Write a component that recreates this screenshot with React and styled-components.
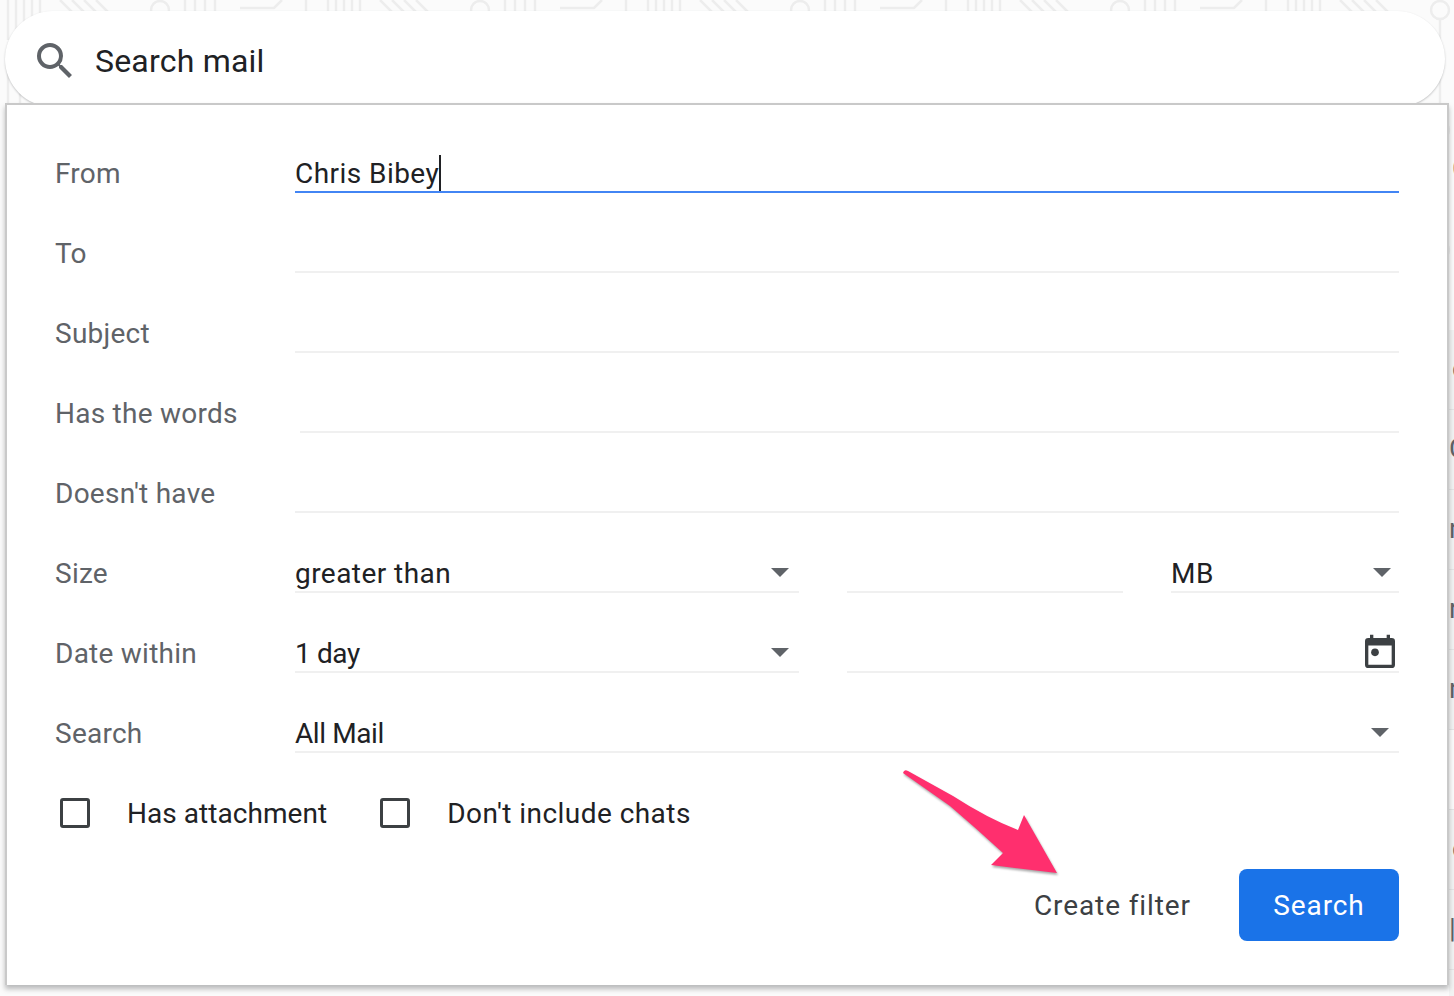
import React from 'react';
import styled, { createGlobalStyle } from 'styled-components';

const GlobalStyle = createGlobalStyle`
  html, body {
    margin: 0;
    padding: 0;
    height: 996px;
    overflow: hidden;
    background: #fbfbfb;
    font-family: Roboto, "Liberation Sans", sans-serif;
  }
`;

const Page = styled.div`
  width: 1454px;
  height: 996px;
  box-sizing: border-box;
  padding: 11px 0 0 5px;
  position: relative;
  overflow: hidden;
`;

const Wallpaper = styled.svg`
  position: absolute;
  left: 0;
  top: 0;
  width: 1454px;
  height: 330px;
`;

const MailEdge = styled.div`
  position: absolute;
  right: 0;
  top: 0;
  width: 5px;
  height: 996px;
  overflow: hidden;
  padding-top: 130px;
  box-sizing: border-box;
`;

const EdgeTop = styled.div`
  height: 200px;
  padding-left: 3px;
  font-size: 28px;
  line-height: 78px;
  color: #5f6368;
`;

const EdgeRow = styled.div`
  height: 80px;
  box-sizing: border-box;
  background: ${(p) => (p.$read ? '#fbfbfb' : '#f2f3f3')};
  border-bottom: 1px solid #e4e5e6;
  padding-left: ${(p) => p.$offset}px;
  font-size: 28px;
  line-height: 78px;
  color: #5f6368;
  white-space: nowrap;
`;

const SearchBar = styled.div`
  position: relative;
  width: 1440px;
  height: 96px;
  box-sizing: border-box;
  padding: 4px 0 0 26px;
  display: flex;
  align-items: center;
  gap: 16px;
  background: #fff;
  border-radius: 48px;
  box-shadow: 0 1px 2px rgba(60, 64, 67, 0.3);
  font-size: 32px;
  letter-spacing: 0.2px;
  color: #202124;
`;

const Panel = styled.div`
  position: relative;
  width: 1444px;
  height: 882px;
  margin-top: -4px;
  box-sizing: border-box;
  padding: 28px 48px 0 48px;
  background: #fff;
  border: 2px solid #c9c9c9;
  border-bottom: 0;
  box-shadow: 0 4px 5px rgba(60, 64, 67, 0.35);
`;

const Row = styled.div`
  display: grid;
  grid-template-columns: 240px 1fr;
  height: 80px;
  font-size: 28px;
`;

const Label = styled.div`
  color: #5f6368;
  line-height: 82px;
  height: 80px;
  letter-spacing: 0.25px;
`;

const Fields = styled.div`
  display: flex;
  gap: 48px;
  height: 60px;
  margin-left: ${(p) => p.$inset || 0}px;
`;

const Field = styled.div`
  flex: ${(p) => (p.$width ? `0 0 ${p.$width}px` : 1)};
  height: 60px;
  box-sizing: border-box;
  display: flex;
  align-items: center;
  justify-content: space-between;
  padding-top: 24px;
  line-height: 40px;
  letter-spacing: ${(p) => p.$spacing ?? 0.45}px;
  color: #202124;
  border-bottom: 2px solid ${(p) => (p.$focused ? '#4285f4' : '#f0f0f0')};
`;

const Caret = styled.span`
  width: 2px;
  height: 36px;
  background: #202124;
  margin-top: -2px;
`;

const Typed = styled.div`
  display: flex;
  align-items: center;
`;

const Arrow = styled.span`
  width: 0;
  height: 0;
  margin: 0 ${(p) => p.$right || 10}px 3px 0;
  border-left: 9px solid transparent;
  border-right: 9px solid transparent;
  border-top: 9px solid #5f6368;
`;

const CalendarIcon = styled.svg`
  width: 40px;
  height: 40px;
  margin: -2px -1px 0 0;
  fill: #3c4043;
`;

const Checks = styled.div`
  display: flex;
  align-items: center;
  height: 60px;
  margin-top: 10px;
  margin-left: 5px;
  font-size: 28px;
  color: #202124;
`;

const Box = styled.span`
  width: 30px;
  height: 30px;
  box-sizing: border-box;
  border: 3px solid #3c4043;
  border-radius: 3px;
  margin-right: 37px;
`;

const CheckLabel = styled.span`
  margin-right: ${(p) => p.$gap || 0}px;
  letter-spacing: ${(p) => p.$spacing}px;
`;

const Actions = styled.div`
  display: flex;
  justify-content: flex-end;
  align-items: center;
  gap: 48px;
  margin-top: 26px;
  font-size: 28px;
  letter-spacing: 0.9px;
`;

const TextButton = styled.span`
  color: #3c4043;
`;

const PrimaryButton = styled.span`
  width: 160px;
  height: 72px;
  border-radius: 8px;
  background: #1a73e8;
  color: #fff;
  display: flex;
  align-items: center;
  justify-content: center;
`;

const ArrowMark = styled.svg`
  position: absolute;
  left: 888px;
  top: 660px;
  width: 170px;
  height: 115px;
  overflow: visible;
  filter: drop-shadow(1px 2px 1px rgba(60, 60, 60, 0.45));
`;

const fields = [
  { label: 'From', value: 'Chris Bibey', focused: true },
  { label: 'To' },
  { label: 'Subject' },
  { label: 'Has the words', inset: 5 },
  { label: "Doesn't have" },
];

// letters of the mail list that stick out past the popup
const edgeRows = [
  { text: 'c', offset: 3 },
  { text: 'C', offset: 0 },
  { text: 'n', offset: 0 },
  { text: 'r', offset: 0 },
  { text: 'n', offset: 0 },
  { text: '', offset: 0, read: true },
  { text: 'c', offset: 3 },
  { text: '|', offset: 0 },
  { text: '', offset: 0 },
];

export default function App() {
  return (
    <Page>
      <GlobalStyle />
      <Wallpaper>
        <defs>
          <pattern id="traces" width="320" height="120" patternUnits="userSpaceOnUse">
            <g fill="none" stroke="#ededed" strokeWidth="2.5">
              <path d="M8 0v40M16 0v40M24 0v40M32 0v40M40 0v40" />
              <path d="M60 0l40 40M72 0l40 40M84 0l40 40M96 0l40 40" />
              <circle cx="160" cy="10" r="9" />
              <path d="M160 19v30M185 0v30M195 0v30M205 0v30M215 0v30" />
              <path d="M240 28h50l16-16V0M240 8h34l8-8" />
              <path d="M8 70v50M20 70v50M60 120l30-30h40M160 70v50M220 80l40 40M236 80l40 40" />
            </g>
          </pattern>
        </defs>
        <rect width="1454" height="330" fill="url(#traces)" />
      </Wallpaper>
      <MailEdge>
        <EdgeTop>C</EdgeTop>
        {edgeRows.map((r, i) => (
          <EdgeRow key={i} $offset={r.offset} $read={r.read}>{r.text}</EdgeRow>
        ))}
      </MailEdge>
      <SearchBar>
        <svg width="48" height="48" viewBox="0 0 24 24" fill="#5f6368">
          <path d="M15.5 14h-.79l-.28-.27A6.47 6.47 0 0 0 16 9.5 6.5 6.5 0 1 0 9.5 16c1.61 0 3.09-.59 4.23-1.57l.27.28v.79l5 4.99L20.49 19l-4.99-5zm-6 0C7.01 14 5 11.99 5 9.5S7.01 5 9.5 5 14 7.01 14 9.5 11.99 14 9.5 14z" />
        </svg>
        Search mail
      </SearchBar>
      <Panel>
        {fields.map((f) => (
          <Row key={f.label}>
            <Label>{f.label}</Label>
            <Fields $inset={f.inset}>
              <Field $focused={f.focused}>
                {f.value && <Typed>{f.value}<Caret /></Typed>}
              </Field>
            </Fields>
          </Row>
        ))}
        <Row>
          <Label>Size</Label>
          <Fields>
            <Field $width={504}>greater than<Arrow /></Field>
            <Field $width={276} />
            <Field>MB<Arrow $right={8} /></Field>
          </Fields>
        </Row>
        <Row>
          <Label>Date within</Label>
          <Fields>
            <Field $width={504} $spacing={-0.4}>1 day<Arrow /></Field>
            <Field>
              <span />
              <CalendarIcon viewBox="0 0 24 24">
                <path d="M19 3h-1V1h-2v2H8V1H6v2H5a2 2 0 0 0-2 2v14a2 2 0 0 0 2 2h14a2 2 0 0 0 2-2V5a2 2 0 0 0-2-2zm0 16H5V7.5h14V19z" />
                <circle cx="9" cy="11.6" r="2.3" />
              </CalendarIcon>
            </Field>
          </Fields>
        </Row>
        <Row>
          <Label>Search</Label>
          <Fields>
            <Field $spacing={-0.4}>All Mail<Arrow /></Field>
          </Fields>
        </Row>
        <Checks>
          <Box />
          <CheckLabel $spacing={0.05} $gap={53}>Has attachment</CheckLabel>
          <Box />
          <CheckLabel $spacing={0.45}>Don't include chats</CheckLabel>
        </Checks>
        <Actions>
          <TextButton>Create filter</TextButton>
          <PrimaryButton>Search</PrimaryButton>
        </Actions>
        <ArrowMark viewBox="0 0 170 115">
          <path d="M8 8 Q9 4 13 6 L58 31 Q92 53 123 65 L129 50 L162 108 L96 100 L108 88 Q82 64 55 41 Z" fill="#ff2f6e" />
        </ArrowMark>
      </Panel>
    </Page>
  );
}
